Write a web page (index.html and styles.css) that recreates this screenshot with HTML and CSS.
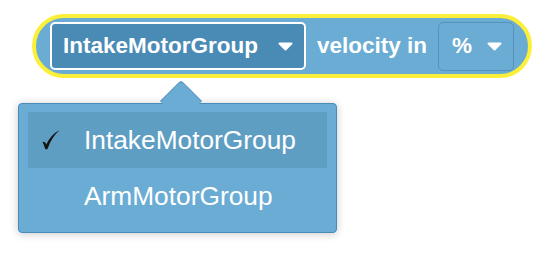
FILE: index.html
```html
<!DOCTYPE html>
<html>
<head>
<meta charset="utf-8">
<link rel="stylesheet" href="styles.css">
</head>
<body>
<div class="stage">
  <div class="block">
    <div class="field">
      <span class="field-text">IntakeMotorGroup</span>
      <svg class="caret" width="15" height="9" viewBox="0 0 15 9"><path d="M1.5 1.5 H13.5 L7.5 7.5 Z" fill="#fff" stroke="#fff" stroke-width="2" stroke-linejoin="round"/></svg>
    </div>
    <span class="label">velocity in</span>
    <div class="unit">
      <span class="unit-text">%</span>
      <svg class="caret" width="15" height="9" viewBox="0 0 15 9"><path d="M1.5 1.5 H13.5 L7.5 7.5 Z" fill="#fff" stroke="#fff" stroke-width="2" stroke-linejoin="round"/></svg>
    </div>
  </div>
  <div class="menu">
    <div class="pointer"><div class="pointer-sq"></div></div>
    <div class="item selected">
      <span class="check"><svg width="20" height="22" viewBox="0 0 20 22"><path d="M1.5 13.2 C3 12.2 4.2 12.6 5.3 15.6 C8 9.5 12.5 4 18.5 1.2 C13.5 5.5 9.5 11.5 6.6 19.8 C5.6 20.6 4.6 20.6 4 19.6 C3.3 16.8 2.6 14.6 1.5 13.2 Z" fill="#141414"/></svg></span>
      <span class="item-text">IntakeMotorGroup</span>
    </div>
    <div class="item"><span class="check"></span><span class="item-text">ArmMotorGroup</span></div>
  </div>
</div>
</body>
</html>
```
FILE: styles.css
```css
html, body {
  margin: 0;
  padding: 0;
  background: #ffffff;
}
.stage {
  position: relative;
  width: 548px;
  height: 254px;
  padding-top: 14px;
  padding-left: 32px;
  box-sizing: border-box;
  font-family: "Liberation Sans", Arial, sans-serif;
}
.block {
  width: 500px;
  height: 64px;
  box-sizing: border-box;
  border: 4px solid #fcef3a;
  border-radius: 32px;
  background: #6aacd3;
  display: flex;
  align-items: center;
  gap: 11px;
  padding-left: 14px;
}
.field {
  width: 256px;
  height: 48px;
  box-sizing: border-box;
  border: 2px solid #ffffff;
  border-radius: 5px;
  background: #4a8bb6;
  display: flex;
  align-items: center;
  justify-content: space-between;
  padding: 0 11px 0 11px;
}
.field-text, .label, .unit-text {
  color: #ffffff;
  font-weight: bold;
  font-size: 22.5px;
}
.caret {
  display: block;
  margin-top: 1px;
}
.unit {
  width: 76px;
  height: 49px;
  box-sizing: border-box;
  border: 1px solid #5592be;
  border-radius: 5px;
  display: flex;
  align-items: center;
  justify-content: space-between;
  padding: 0 11px 0 13px;
}
.menu {
  position: absolute;
  left: 18px;
  top: 103px;
  width: 319px;
  height: 130px;
  box-sizing: border-box;
  background: #6aacd3;
  border: 1.5px solid #4a8bb8;
  border-radius: 4px;
  box-shadow: 0 1px 9px rgba(0, 0, 0, 0.22);
  padding: 8px 9px;
}
.pointer {
  position: absolute;
  left: 138px;
  top: -24px;
  width: 48px;
  height: 26px;
  overflow: hidden;
}
.pointer-sq {
  position: absolute;
  left: 9px;
  top: 6px;
  width: 30px;
  height: 30px;
  box-sizing: border-box;
  background: #6aacd3;
  border-top: 1.5px solid #4a8bb8;
  border-left: 1.5px solid #4a8bb8;
  border-top-left-radius: 4px;
  transform: rotate(45deg);
}
.item {
  height: 56px;
  display: flex;
  align-items: center;
  color: #ffffff;
  font-size: 26.3px;
}
.item.selected {
  background: #5f9ec3;
}
.check {
  width: 56px;
  box-sizing: border-box;
  padding-left: 13px;
  display: flex;
  align-items: center;
}
.item-text {
  font-family: "Liberation Sans", Arial, sans-serif;
}
```
